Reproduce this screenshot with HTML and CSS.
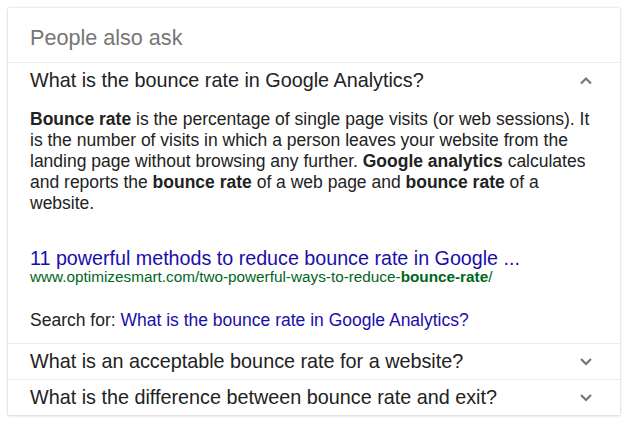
FILE: index.html
```html
<!DOCTYPE html>
<html lang="en">
<head>
<meta charset="utf-8">
<title>People also ask</title>
<link rel="stylesheet" href="styles.css">
</head>
<body>
<div class="card">
  <div class="card-head">People also ask</div>
  <div class="qa open">
    <div class="q-row">
      <span class="q-text">What is the bounce rate in Google Analytics?</span>
      <svg class="chev" width="14" height="9" viewBox="0 0 14 9"><polyline points="2,7.5 7,2.5 12,7.5" fill="none" stroke="#757575" stroke-width="2.2"/></svg>
    </div>
    <div class="answer">
      <p class="snippet"><b>Bounce rate</b> is the percentage of single page visits (or web sessions). It is the number of visits in which a person leaves your website from the landing page without browsing any further. <b>Google analytics</b> calculates and reports the <b>bounce rate</b> of a web page and <b>bounce rate</b> of a website.</p>
      <a class="res-title" href="#">11 powerful methods to reduce bounce rate in Google ...</a>
      <div class="res-url">www.optimizesmart.com/two-powerful-ways-to-reduce-<b>bounce-rate</b>/</div>
      <div class="search-for">Search for: <a href="#">What is the bounce rate in Google Analytics?</a></div>
    </div>
  </div>
  <div class="qa">
    <div class="q-row">
      <span class="q-text">What is an acceptable bounce rate for a website?</span>
      <svg class="chev" width="14" height="9" viewBox="0 0 14 9"><polyline points="2,2 7,7 12,2" fill="none" stroke="#757575" stroke-width="2.2"/></svg>
    </div>
  </div>
  <div class="qa">
    <div class="q-row">
      <span class="q-text">What is the difference between bounce rate and exit?</span>
      <svg class="chev" width="14" height="9" viewBox="0 0 14 9"><polyline points="2,2 7,7 12,2" fill="none" stroke="#757575" stroke-width="2.2"/></svg>
    </div>
  </div>
</div>
</body>
</html>
```
FILE: styles.css
```css
html, body {
  margin: 0;
  padding: 0;
  background: #ffffff;
}
body {
  padding: 8px;
  font-family: "Liberation Sans", Arial, sans-serif;
  color: #222222;
}
.card {
  width: 612px;
  background: #ffffff;
  box-shadow: 0 0 2px rgba(0, 0, 0, 0.16), 0 1px 3px rgba(0, 0, 0, 0.12);
}
.card-head {
  padding: 17px 22px 11px;
  font-size: 21.6px;
  line-height: 26px;
  color: #767676;
  border-bottom: 1px solid #ebebeb;
}
.qa + .qa {
  border-top: 1px solid #ebebeb;
}
.q-row {
  display: flex;
  align-items: center;
  justify-content: space-between;
  height: 35px;
  padding: 0 27px 0 22px;
  font-size: 19.8px;
  line-height: 35px;
  color: #222222;
}
.chev {
  display: block;
}
.answer {
  padding: 11px 20px 12px 22px;
  font-size: 17.5px;
  line-height: 21px;
}
.snippet {
  margin: 0;
  width: 570px;
}
.res-title {
  display: block;
  margin-top: 33px;
  font-size: 19.7px;
  line-height: 22px;
  color: #1a0dab;
  text-decoration: none;
}
.res-url {
  font-size: 15.3px;
  line-height: 15px;
  color: #006621;
}
.search-for {
  margin-top: 26px;
}
.search-for a {
  color: #1a0dab;
  text-decoration: none;
}
```
